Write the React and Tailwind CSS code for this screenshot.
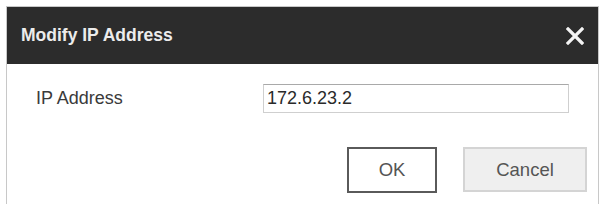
export default function App(){
  return (
    <div className="w-[601px] h-[204px] bg-white overflow-hidden" style={{fontFamily:'"Liberation Sans", Arial, sans-serif'}}>
      <div className="ml-[6px] mt-[6px] w-[593px] h-[220px] border border-[#c8c8c8] bg-white">
        {/* header */}
        <div className="h-[57px] bg-[#2c2c2c] flex items-center justify-between pl-[14px] pr-[14px]">
          <p className="text-[17.5px] font-bold text-[#ececec]">Modify IP Address</p>
          <button className="w-[18px] h-[18px] flex items-center justify-center">
            <svg width="18" height="18" viewBox="0 0 18 18">
              <path d="M2 2 L16 16 M16 2 L2 16" stroke="#f4f4f4" strokeWidth="3.2" strokeLinecap="square" />
            </svg>
          </button>
        </div>
        {/* body */}
        <div className="pl-[29px] pr-[11px] pt-[20px]">
          <div className="flex items-center">
            <p className="w-[227px] text-[18px] text-[#3a3a3a]">IP Address</p>
            <input defaultValue="172.6.23.2" type="text" className="w-[306px] h-[29px] border border-[#cfcfcf] border-t-[#a9a9a9] px-[3px] text-[18px] text-[#2a2a2a] outline-none" />
          </div>
          <div className="flex justify-end gap-[26px] mt-[34px]">
            <button className="w-[90px] h-[46px] border-2 border-[#5a5a5a] bg-white text-[18.5px] text-[#555]">OK</button>
            <button className="w-[124px] h-[45px] border-2 border-[#d4d4d4] bg-[#efefef] text-[18.5px] text-[#555]">Cancel</button>
          </div>
        </div>
      </div>
    </div>
  )
}
